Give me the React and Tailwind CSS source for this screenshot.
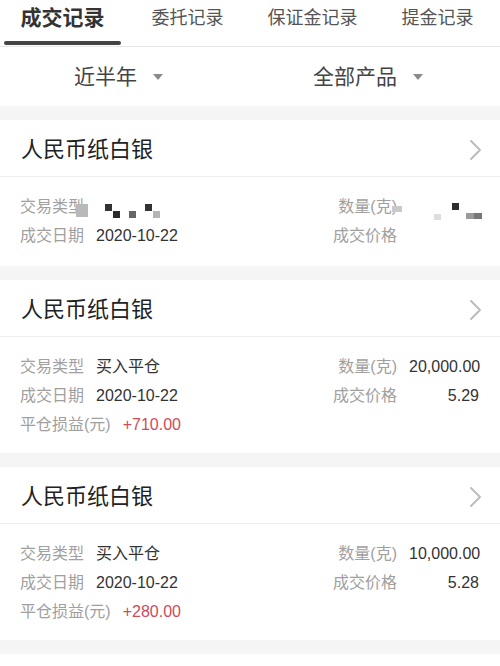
import React from 'react';

const tabs = ['成交记录', '委托记录', '保证金记录', '提金记录'];

const records = [
  { id: 1, name: '人民币纸白银', hidden: true, date: '2020-10-22' },
  { id: 2, name: '人民币纸白银', type: '买入平仓', qty: '20,000.00', date: '2020-10-22', price: '5.29', pnl: '+710.00' },
  { id: 3, name: '人民币纸白银', type: '买入平仓', qty: '10,000.00', date: '2020-10-22', price: '5.28', pnl: '+280.00' },
];

const Caret = () => (
  <svg width="10" height="6" viewBox="0 0 10 6" className="ml-[16px]">
    <path d="M0 0 L10 0 L5 6 Z" fill="#8a8a8a" />
  </svg>
);

const Chevron = () => (
  <svg width="14" height="22" viewBox="0 0 14 22">
    <path d="M2 2 L11 11 L2 20" fill="none" stroke="#bdbdbd" strokeWidth="2" strokeLinecap="round" strokeLinejoin="round" />
  </svg>
);

// 打码的小方块
const Mosaic = () => (
  <>
    <span className="absolute left-[76px] top-[27px] w-[12px] h-[13px] bg-[#b9b9b9]" />
    <span className="absolute left-[105px] top-[27px] w-[7px] h-[7px] bg-[#333]" />
    <span className="absolute left-[113px] top-[34px] w-[7px] h-[7px] bg-[#2a2a2a]" />
    <span className="absolute left-[129px] top-[34px] w-[7px] h-[7px] bg-[#666]" />
    <span className="absolute left-[145px] top-[27px] w-[7px] h-[7px] bg-[#333]" />
    <span className="absolute left-[153px] top-[34px] w-[7px] h-[7px] bg-[#b5b5b5]" />
    <span className="absolute left-[392px] top-[29px] w-[10px] h-[6px] bg-[#c9c9c9]" />
    <span className="absolute left-[434px] top-[37px] w-[7px] h-[6px] bg-[#dedede]" />
    <span className="absolute left-[452px] top-[26px] w-[7px] h-[7px] bg-[#2e2e2e]" />
    <span className="absolute left-[466px] top-[36px] w-[8px] h-[6px] bg-[#999]" />
    <span className="absolute left-[474px] top-[36px] w-[8px] h-[6px] bg-[#777]" />
  </>
);

const Row = ({ label, value, rLabel, rValue, red }) => (
  <div className="flex items-center justify-between h-[29px]">
    <div className="flex items-center gap-[12px]">
      <span className="text-[#a0a0a0]">{label}</span>
      <span className={red ? 'text-[#cf4a5a]' : 'text-[#333]'}>{value}</span>
    </div>
    {rLabel && (
      <div className="flex items-center gap-[12px]">
        <span className="text-[#a0a0a0]">{rLabel}</span>
        <span className="w-[70px] text-right text-[#333]">{rValue}</span>
      </div>
    )}
  </div>
);

const RecordCard = ({ rec }) => (
  <div className="bg-white">
    <div className="flex items-center justify-between h-[57px] pt-[3px] pl-[21px] pr-[17px] border-b border-[#eeeeee]">
      <span className="text-[22px] text-[#222]">{rec.name}</span>
      <Chevron />
    </div>
    <div className={`relative pl-[20px] pr-[21px] pt-[15px] text-[16px] ${rec.hidden ? 'pb-[16px]' : 'pb-[14px]'}`}>
      {rec.hidden ? (
        <>
          <Row label="交易类型" value="" rLabel="数量(克)" rValue="" />
          <Row label="成交日期" value={rec.date} rLabel="成交价格" rValue="" />
          <Mosaic />
        </>
      ) : (
        <>
          <Row label="交易类型" value={rec.type} rLabel="数量(克)" rValue={rec.qty} />
          <Row label="成交日期" value={rec.date} rLabel="成交价格" rValue={rec.price} />
          <Row label="平仓损益(元)" value={rec.pnl} red />
        </>
      )}
    </div>
  </div>
);

export default function App() {
  return (
    <div className="w-[500px] h-[666px] overflow-hidden bg-white font-['Liberation_Sans','Noto_Sans_CJK_SC',sans-serif]">
      {/* 顶部标签 */}
      <div className="grid grid-cols-4 h-[47px] border-b border-[#e6e6e6]">
        {tabs.map((t, i) => (
          <div key={t} className="relative flex items-center justify-center pb-[10px]">
            <span className={i === 0 ? 'text-[21px] font-bold text-[#333]' : 'text-[18px] text-[#555]'}>{t}</span>
            {i === 0 && (
              <span className="absolute bottom-[1px] left-[4px] w-[117px] h-[4px] rounded-full bg-[#444]" />
            )}
          </div>
        ))}
      </div>

      {/* 筛选 */}
      <div className="grid grid-cols-2 h-[59px] text-[21px] text-[#444]">
        <div className="flex items-center pl-[74px]">
          <span>近半年</span>
          <Caret />
        </div>
        <div className="flex items-center pl-[63px]">
          <span>全部产品</span>
          <Caret />
        </div>
      </div>

      <div className="bg-[#f5f5f5] flex flex-col gap-[14px] pt-[14px] pb-[14px]">
        {records.map(r => (
          <RecordCard key={r.id} rec={r} />
        ))}
      </div>
    </div>
  );
}
